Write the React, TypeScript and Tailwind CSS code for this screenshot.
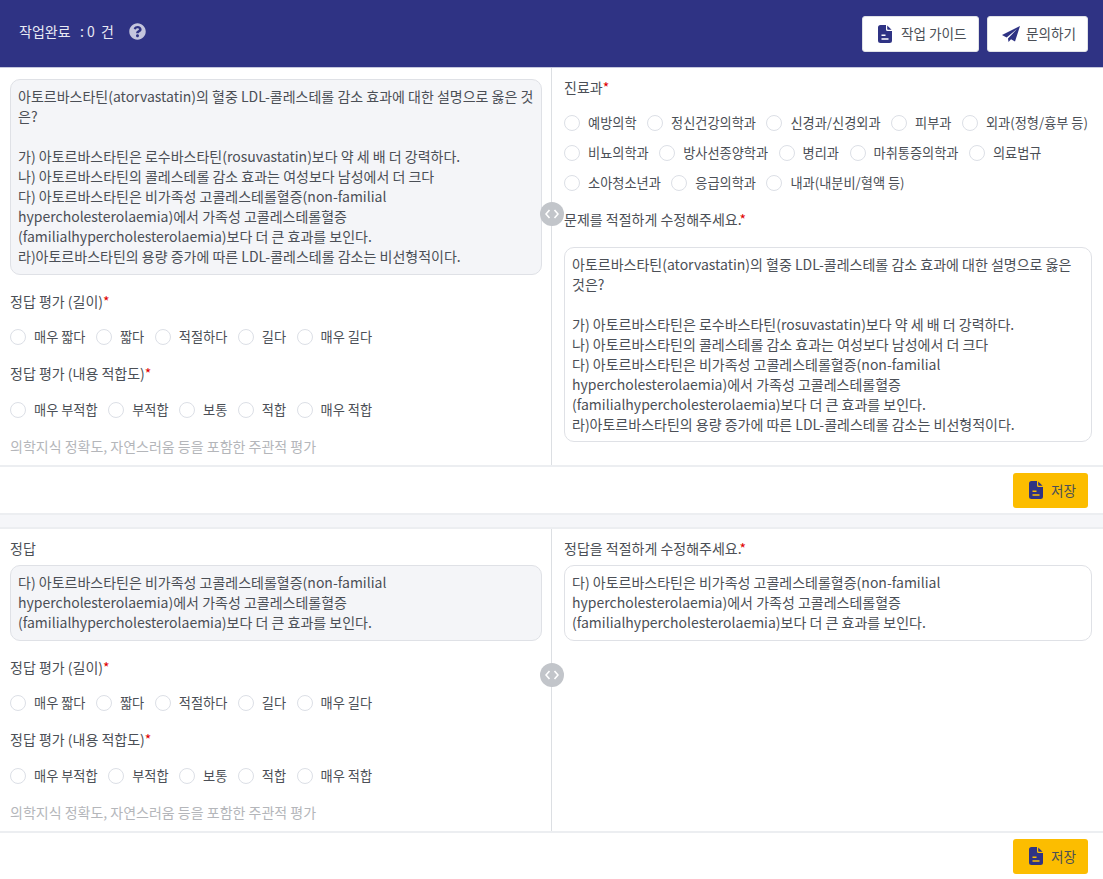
import { FaQuestionCircle } from 'react-icons/fa';

const FONT = { fontFamily: '"Noto Sans CJK KR", "Noto Sans", sans-serif' };

const QUESTION = `아토르바스타틴(atorvastatin)의 혈중 LDL-콜레스테롤 감소 효과에 대한 설명으로 옳은 것은?

가) 아토르바스타틴은 로수바스타틴(rosuvastatin)보다 약 세 배 더 강력하다.
나) 아토르바스타틴의 콜레스테롤 감소 효과는 여성보다 남성에서 더 크다
다) 아토르바스타틴은 비가족성 고콜레스테롤혈증(non-familial
hypercholesterolaemia)에서 가족성 고콜레스테롤혈증
(familialhypercholesterolaemia)보다 더 큰 효과를 보인다.
라)아토르바스타틴의 용량 증가에 따른 LDL-콜레스테롤 감소는 비선형적이다.`;

const ANSWER = `다) 아토르바스타틴은 비가족성 고콜레스테롤혈증(non-familial
hypercholesterolaemia)에서 가족성 고콜레스테롤혈증
(familialhypercholesterolaemia)보다 더 큰 효과를 보인다.`;

const DEPTS = [
  '예방의학', '정신건강의학과', '신경과/신경외과', '피부과', '외과(정형/흉부 등)',
  '비뇨의학과', '방사선종양학과', '병리과', '마취통증의학과', '의료법규',
  '소아청소년과', '응급의학과', '내과(내분비/혈액 등)',
];
const LENGTHS = ['매우 짧다', '짧다', '적절하다', '길다', '매우 길다'];
const FITS = ['매우 부적합', '부적합', '보통', '적합', '매우 적합'];

function FileIcon({ cut }: { cut: string }) {
  return (
    <svg width="14" height="18" viewBox="0 0 14 18" className="shrink-0">
      <path d="M2.5 0H8v4.5A1.5 1.5 0 0 0 9.5 6H14v9.5a2.5 2.5 0 0 1-2.5 2.5h-9A2.5 2.5 0 0 1 0 15.5v-13A2.5 2.5 0 0 1 2.5 0z" fill="#2f3384" />
      <path d="M9.2 0.4 13.6 4.8H10a.8.8 0 0 1-.8-.8z" fill="#2f3384" />
      <path d="M3.5 10.2h4M3.5 14h7" stroke={cut} strokeWidth="1.5" fill="none" />
    </svg>
  );
}

function PlaneIcon() {
  return (
    <svg width="18" height="16" viewBox="0 0 18 16" className="shrink-0">
      <path d="M18 0 0 9l4.6 2.5L15 3 6 12.6 6.5 16 9 13.2l4 2.4z" fill="#2f3384" />
    </svg>
  );
}

function Label({ children }: { children: React.ReactNode }) {
  return (
    <div className="text-sm leading-5 text-[#4b4f56]">
      {children}
      <span className="text-[#e00000]">*</span>
    </div>
  );
}

function RadioGroup({ name, options }: { name: string; options: string[] }) {
  return (
    <div className="flex flex-wrap gap-x-[10.5px]">
      {options.map((o) => (
        <label key={o} className="flex h-[30px] items-center gap-2 text-[13.2px] text-[#4b4f56]">
          <input
            type="radio"
            name={name}
            className="h-4 w-4 appearance-none rounded-full border border-[#dcdfe6] bg-white"
          />
          {o}
        </label>
      ))}
    </div>
  );
}

function ReadBox({ text }: { text: string }) {
  return (
    <div className="whitespace-pre-line break-all rounded-[10px] border border-[#dfe1e6] bg-[#f4f5f8] px-[7px] pb-2 pt-[6px] text-sm leading-5 text-[#4b4f56]">
      {text}
    </div>
  );
}

function EditBox({ text, height }: { text: string; height: string }) {
  return (
    <textarea
      defaultValue={text}
      className={`block w-full resize-none overflow-hidden rounded-[10px] border border-[#dfe1e6] bg-white px-[7px] pb-2 pt-[6px] text-sm leading-5 text-[#4b4f56] outline-none ${height}`}
    />
  );
}

function Evaluation({ id }: { id: string }) {
  return (
    <>
      <div className="mt-4">
        <Label>정답 평가 (길이)</Label>
        <div className="mt-[11px]">
          <RadioGroup name={`${id}-len`} options={LENGTHS} />
        </div>
      </div>
      <div className="mt-[11px]">
        <Label>정답 평가 (내용 적합도)</Label>
        <div className="mt-[12px]">
          <RadioGroup name={`${id}-fit`} options={FITS} />
        </div>
      </div>
      <div className="mt-[11px] text-sm leading-5 text-[#b4b6ba]">
        의학지식 정확도, 자연스러움 등을 포함한 주관적 평가
      </div>
    </>
  );
}

function Handle() {
  return (
    <div className="absolute left-[540px] top-[134px] flex h-6 w-6 items-center justify-center rounded-full bg-[#c2c5ca]">
      <svg width="14" height="10" viewBox="0 0 14 10" fill="none" stroke="#ffffff" strokeWidth="1.6">
        <path d="M4.5 1 1 5l3.5 4M9.5 1 13 5l-3.5 4" />
      </svg>
    </div>
  );
}

function SaveBar() {
  return (
    <div className="flex h-[48px] items-center justify-end border-t-2 border-[#eceef1] pr-[15px]">
      <button className="flex h-[35px] w-[75px] items-center gap-2 rounded-[3px] bg-[#fcbd00] pl-4 text-[13.6px] text-[#4b4f56]">
        <FileIcon cut="#fcbd00" />
        저장
      </button>
    </div>
  );
}

export default function App() {
  return (
    <div style={FONT} className="min-h-[879px] w-full overflow-hidden bg-white">
      <header className="flex h-[68px] items-center justify-between border-b border-[#c5c7dd] bg-[#2f3384] pl-[19px] pr-[15px]">
        <div className="mb-[5px] flex items-center text-sm text-[#e8e9f3]">
          <span>작업완료 &nbsp;&nbsp;: 0 &nbsp;건</span>
          <FaQuestionCircle className="ml-[15px] h-[17px] w-[17px] text-[#c4c5dd]" />
        </div>
        <div className="flex gap-2">
          <button className="flex h-[36px] w-[117px] items-center gap-[9px] rounded-[3px] border border-[#dfe1e6] bg-white pl-[15px] text-[13.6px] text-[#4b4f56]">
            <FileIcon cut="#ffffff" />
            작업 가이드
          </button>
          <button className="flex h-[36px] w-[101px] items-center gap-[6px] rounded-[3px] border border-[#dfe1e6] bg-white pl-[14px] text-[13.6px] text-[#4b4f56]">
            <PlaneIcon />
            문의하기
          </button>
        </div>
      </header>

      <section className="relative flex h-[397px]">
        <div className="w-[552px] border-r border-[#dcdfe3] pl-[10px] pr-[9px] pt-[11px]">
          <ReadBox text={QUESTION} />
          <Evaluation id="q" />
        </div>
        <div className="flex-1 pl-3 pr-[11px] pt-[9px]">
          <Label>진료과</Label>
          <div className="mt-[11px]">
            <RadioGroup name="dept" options={DEPTS} />
          </div>
          <div className="mt-[11px]">
            <Label>문제를 적절하게 수정해주세요.</Label>
          </div>
          <div className="mt-[18px]">
            <EditBox text={QUESTION} height="h-[195px]" />
          </div>
        </div>
        <Handle />
      </section>
      <SaveBar />

      <div className="h-4 border-y-2 border-[#eceef1] bg-[#f5f6f9]" />

      <section className="relative flex h-[302px]">
        <div className="w-[552px] border-r border-[#dcdfe3] pl-[10px] pr-[9px] pt-[9px]">
          <div className="mb-[7px] text-sm leading-5 text-[#4b4f56]">정답</div>
          <ReadBox text={ANSWER} />
          <Evaluation id="a" />
        </div>
        <div className="flex-1 pl-3 pr-[11px] pt-[9px]">
          <Label>정답을 적절하게 수정해주세요.</Label>
          <div className="mt-[7px]">
            <EditBox text={ANSWER} height="h-[76px]" />
          </div>
        </div>
        <Handle />
      </section>
      <SaveBar />
    </div>
  );
}
